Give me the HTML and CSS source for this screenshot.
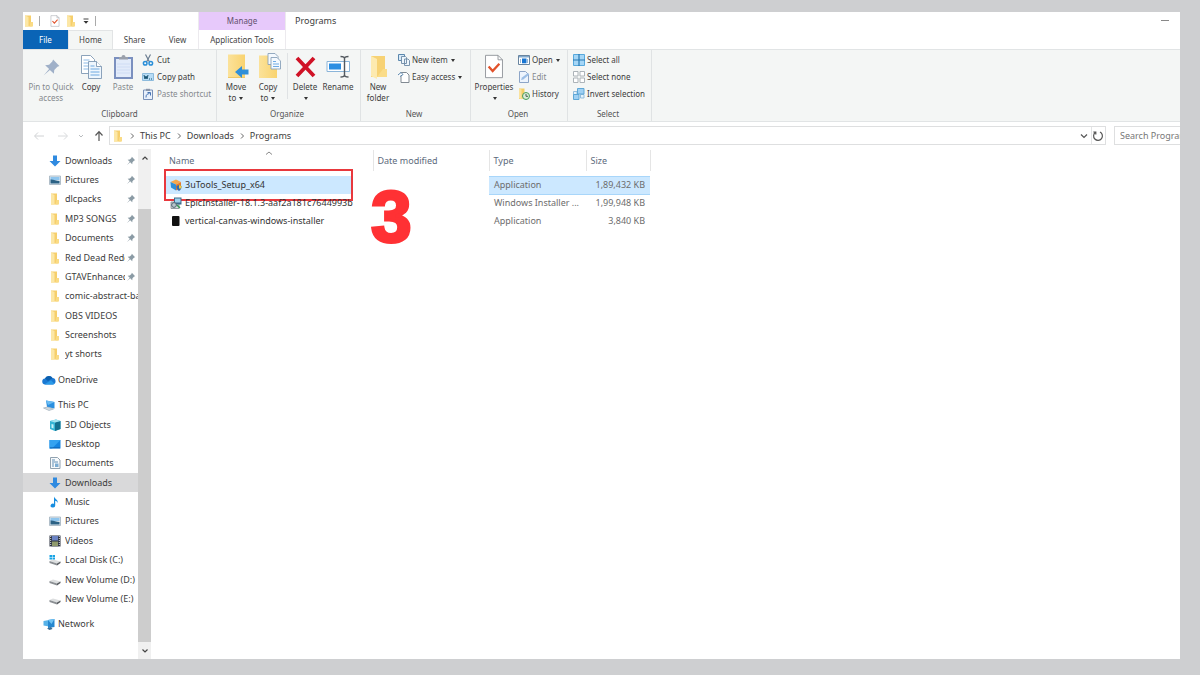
FILE: index.html
```html
<!DOCTYPE html>
<html lang="en">
<head>
<meta charset="utf-8">
<title>Programs</title>
<link rel="stylesheet" href="styles.css">
</head>
<body>
<svg class="defs" aria-hidden="true">
  <defs>
    <linearGradient id="gFolder" x1="0" x2="1"><stop offset="0" stop-color="#fbe29a"/><stop offset="1" stop-color="#f9d36f"/></linearGradient>
    <symbol id="folder" viewBox="0 0 12 12"><path d="M2 .5h6v9l1 2H2z" fill="#f6cf6c"/><path d="M2 .5l3.500 1.500v9.500L2 11.500z" fill="#fce7a6"/><path d="M7.500 7H10v4.500H6.500z" fill="#fadb85"/></symbol>
    <symbol id="pin" viewBox="0 0 24 24"><path d="M14 2l8 8-2.500 1-4 4-.5 5-5-5-8 7 7-8-5-5 5-.5 4-4z"/></symbol>
    <symbol id="doc-check" viewBox="0 0 22 28"><path d="M1.500 1.500h14l5 5v20h-19z" fill="#fff" stroke="#8c9196"/><path d="M15.500 1.500v5h5" fill="none" stroke="#8c9196"/><path d="M5 14l4.500 5L17 11" fill="none" stroke="#e2522b" stroke-width="2.600"/></symbol>
    <symbol id="down" viewBox="0 0 12 12"><path d="M4 .5h4V6h3.500L6 11.500.5 6H4z" fill="#2f8ae0"/></symbol>
    <symbol id="picture" viewBox="0 0 12 12"><path d="M.5 2h11v8.500H.5z" fill="#dfeaf2" stroke="#9fb0bd" stroke-width=".8"/><path d="M1.500 3h9v3h-9z" fill="#8ec5ee"/><path d="M1.500 9.500v-4C4 5 7 7 10.500 7v2.500z" fill="#2c6285"/></symbol>
    <symbol id="drive" viewBox="0 0 12 12"><path d="M.5 7L4 5.500l7.500 2-3.500 2z" fill="#dcdedf"/><path d="M.5 7L8 9.500v2L.5 9z" fill="#8b8f93"/><path d="M8 9.500l3.500-2v1.500L8 11.500z" fill="#55595d"/></symbol>
  </defs>
</svg>

<div class="window">
  <header class="head">
    <div class="head-left">
      <div class="quick-bar">
        <svg class="i12"><use href="#folder"/></svg><i class="bar"></i>
        <svg class="i12"><use href="#doc-check"/></svg>
        <svg class="i12"><use href="#folder"/></svg>
        <svg class="i8" viewBox="0 0 8 8"><path d="M1.500 2h5" stroke="#444"/><path d="M1.500 4h5L4 6.800z" fill="#333"/></svg><i class="bar"></i>
      </div>
      <nav class="tabs">
        <button class="tab file">File</button><button class="tab active">Home</button><button class="tab">Share</button><button class="tab">View</button>
      </nav>
    </div>
    <div class="context"><div class="manage">Manage</div><button class="tab">Application Tools</button></div>
    <h1 class="title">Programs</h1>
    <button class="minimize" aria-label="Minimize"></button>
  </header>

  <section class="ribbon">
    <div class="group clipboard">
      <div class="tools">
        <button class="big pinb dim"><svg viewBox="0 0 28 28"><use href="#pin" x="5" y="5" width="19" height="19" fill="#9fb0c8"/></svg>Pin to Quick<br>access</button>
        <button class="big copyb"><svg viewBox="0 0 28 28"><g stroke="#7f99b3" stroke-width=".9"><path d="M4.500 2.500h9l4 4v14h-13z" fill="#fff"/><path d="M6.500 7h6m-6 3h9m-9 3h9m-9 3h9" stroke="#7fb2e3"/><path d="M11.500 8.500h8l5 5v12h-13z" fill="#eef6fd"/><path d="M19.500 8.500v5h5" fill="#fff"/><path d="M13.500 13h4m-4 3h9m-9 3h9m-9 3h9" stroke="#5f9fdd"/></g></svg>Copy</button>
        <button class="big pasteb dim"><svg viewBox="0 0 28 28"><path d="M6 5h17v20H6z" fill="#e2ebfa" stroke="#7b90bf" stroke-width="2"/><path d="M10 6.500V4h2.500a2 2 0 0 1 4 0H19v2.500z" fill="#9aa0ab"/><path d="M8 11h13M8 14h13M8 17h13M8 20h13" stroke="#cfdcf4"/></svg>Paste</button>
        <div class="smalls">
          <button class="small"><svg class="i12" viewBox="0 0 12 12"><path d="M3.500.5l4 7.500M8.500.5l-4 7.500" stroke="#6b7d90" stroke-width="1.200"/><g fill="none" stroke="#2a8fd8" stroke-width="1.500"><circle cx="3.200" cy="9.300" r="1.800"/><circle cx="8.800" cy="9.300" r="1.800"/></g></svg>Cut</button>
          <button class="small"><svg class="i12" viewBox="0 0 12 12"><path d="M.5 2.500h11v7H.5z" fill="#b7dcf5" stroke="#8dbbdc"/><path d="M2 4l1 4 1-3 1 3 1-4M7 8h1m1 0h1" fill="none" stroke="#15516f"/></svg>Copy path</button>
          <button class="small dim"><svg class="i12" viewBox="0 0 12 12"><path d="M1.500 2h9v9.500h-9z" fill="#e8f0fb" stroke="#7890b8"/><path d="M4 .8h4V3H4z" fill="#8a95a8"/><path d="M4 9.500c0-3 1-3.500 3.500-4M5.500 4.500h3v3" fill="none" stroke="#4774b3"/></svg>Paste shortcut</button>
        </div>
      </div>
      <div class="caption">Clipboard</div>
    </div>
    <div class="group organize">
      <div class="tools">
        <button class="big w32"><svg viewBox="0 0 28 28"><path d="M6 1.500h17V25H6z" fill="url(#gFolder)"/><path d="M6 24.500h17" stroke="#efc765"/><path d="M13 19l7-6v3.500h6.500v5H20V25z" fill="#2f8fd9"/></svg>Move<br>to <i class="caret"></i></button>
        <button class="big w32"><svg viewBox="0 0 28 28"><path d="M5 2.500h18V25H5z" fill="url(#gFolder)"/><g fill="#f4f9fe" stroke="#8aa2ba" stroke-width=".9"><path d="M14 .5h7l3 3v8H14z"/><path d="M17 4.500h6l3.500 3.500v8H17z"/></g><path d="M19 8.500h3m-3 2.500h6m-6 2.500h6" stroke="#6faae4"/></svg>Copy<br>to <i class="caret"></i></button>
        <i class="rule"></i>
        <button class="big w34"><svg viewBox="0 0 28 28"><path d="M6 5l17 18M23 5L6 23" stroke="#d01226" stroke-width="3.800"/></svg>Delete<br><i class="caret"></i></button>
        <button class="big w32"><svg viewBox="0 0 28 28"><path d="M3 8.500h22.500v10H3z" fill="#fff" stroke="#8bb5d9"/><path d="M5 10.500h12v6H5z" fill="#2d8fe2"/><path d="M16.500 3.500c3 0 4 .5 4 2v16.500c0 1.500-1 2-4 2m8-20.500c-3 0-4 .5-4 2m0 16.500c0 1.500 1 2 4 2" fill="none" stroke="#52585e" stroke-width="1.400"/></svg>Rename</button>
      </div>
      <div class="caption">Organize</div>
    </div>
    <div class="group new">
      <div class="tools">
        <button class="big w34"><svg viewBox="0 0 28 28"><path d="M7 3h14v19l2 2H7z" fill="#f7d274"/><path d="M7 3l6 3v20l-6-3z" fill="#fdeab0"/><path d="M19 16h4v8H13z" fill="#fadc88"/></svg>New<br>folder</button>
        <div class="smalls">
          <button class="small"><svg class="i12" viewBox="0 0 12 12"><path d="M.5.5h6v6h-6z" fill="#d8eaf8" stroke="#5a87ad"/><path d="M3.500 2.500h4l1 1v6h-5zM6.500 5h3.500l1.500 1.500V11.500h-5z" fill="#eef6fc" stroke="#6d8aa5" stroke-width=".9"/></svg>New item <i class="caret"></i></button>
          <button class="small"><svg class="i12" viewBox="0 0 12 12"><path d="M3 1.500h5.500L11 4v7.500H3z" fill="#fff" stroke="#818a92"/><path d="M0 4l3-2.500 2 2-3 2" fill="#fff" stroke="#4a7ba5" stroke-width=".9"/></svg>Easy access <i class="caret"></i></button>
        </div>
      </div>
      <div class="caption">New</div>
    </div>
    <div class="group open">
      <div class="tools">
        <button class="big w44"><svg viewBox="0 0 28 28"><use href="#doc-check" x="4" y="1" width="20" height="25"/></svg>Properties<br><i class="caret"></i></button>
        <div class="smalls">
          <button class="small"><svg class="i12" viewBox="0 0 12 12"><path d="M.5 1.500h11v9H.5z" fill="#fff" stroke="#68849f"/><path d="M1 2h10v1.500H1z" fill="#82a9cc"/><path d="M2 5h1v4H2zM9 5h1v4H9z" fill="#98b7d4"/><path d="M4 4.500h4.500v4.800H4z" fill="#1775d2"/></svg>Open <i class="caret"></i></button>
          <button class="small dim"><svg class="i12" viewBox="0 0 12 12"><path d="M1.500.5h6l3 3v8h-9z" fill="#edf4fd" stroke="#8da5c7"/><path d="M3 9l1-2.500L10 2l1.300 1.500-6 5z" fill="#9cbee5"/></svg>Edit</button>
          <button class="small"><svg class="i12" viewBox="0 0 12 12"><path d="M1 .5h5.500v8l1 2L1 11z" fill="#f6cf67"/><path d="M1 .5l2.500 1v10L1 10z" fill="#fae3a0"/><circle cx="8" cy="8" r="3.500" fill="#dcebd9" stroke="#4a9d58"/><path d="M8 6v2.300h2" fill="none" stroke="#45604c"/></svg>History</button>
        </div>
      </div>
      <div class="caption">Open</div>
    </div>
    <div class="group select">
      <div class="tools">
        <div class="smalls">
          <button class="small"><svg class="i12" viewBox="0 0 12 12"><path d="M.5.5h11v11H.5z" fill="#a5d6f6" stroke="#58a9dc"/><path d="M6 0v12M0 6h12" stroke="#2879b2" stroke-width="1.200"/></svg>Select all</button>
          <button class="small"><svg class="i12" viewBox="0 0 12 12"><path d="M.5.5H5V5H.5zM7 .5h4.500V5H7zM.5 7H5v4.500H.5zM7 7h4.500v4.500H7z" fill="#fff" stroke="#a4abb1" stroke-width=".9"/></svg>Select none</button>
          <button class="small"><svg class="i12" viewBox="0 0 12 12"><path d="M.5 3.500H4V7H.5zM7.500 6.500H11V10H7.500z" fill="#e3f2fc" stroke="#93bddc"/><path d="M4.500.5h6.500v5.500H4.500zM.5 6.500h5.500v5H.5z" fill="#9fd0f3" stroke="#5ea7d6"/></svg>Invert selection</button>
        </div>
      </div>
      <div class="caption">Select</div>
    </div>
  </section>

  <div class="location">
    <div class="history">
      <button aria-label="Back"><svg class="i12" viewBox="0 0 12 12"><path d="M11 6H2M5 2.500L1.500 6 5 9.500" stroke="#d0d2d4"/></svg></button>
      <button aria-label="Forward"><svg class="i12" viewBox="0 0 12 12"><path d="M1 6h9M7 2.500L10.500 6 7 9.500" stroke="#d8dadc"/></svg></button>
      <button aria-label="Recent"><svg class="i8" viewBox="0 0 8 8"><path d="M2 3l2 2 2-2" stroke="#b9bcbf"/></svg></button>
      <button aria-label="Up"><svg class="i12" viewBox="0 0 12 12"><path d="M6 11V2M2.500 5.500L6 1.700l3.500 3.800" stroke="#555" stroke-width="1.200"/></svg></button>
    </div>
    <div class="address">
      <svg class="i12"><use href="#folder"/></svg>
      <svg class="i8 sep" viewBox="0 0 8 8"><path d="M3 1.500L5.500 4 3 6.500"/></svg><a href="#">This PC</a>
      <svg class="i8 sep" viewBox="0 0 8 8"><path d="M3 1.500L5.500 4 3 6.500"/></svg><a href="#">Downloads</a>
      <svg class="i8 sep" viewBox="0 0 8 8"><path d="M3 1.500L5.500 4 3 6.500"/></svg><a href="#">Programs</a>
      <button class="drop" aria-label="Previous locations"><svg class="i8" viewBox="0 0 8 8"><path d="M1 2.500l3 3 3-3" stroke="#555" stroke-width="1.200"/></svg></button>
      <button class="refresh" aria-label="Refresh"><svg class="i12" viewBox="0 0 12 12"><path d="M8 2a4.400 4.400 0 1 1-4.500.3M3.800 4.500V2h-2.500" stroke="#555" stroke-width="1.200"/></svg></button>
    </div>
    <input class="search" type="text" aria-label="Search Programs" placeholder="Search Programs">
  </div>

  <main class="content">
    <nav class="tree">
      <ul class="branch eleven">
        <li><a href="#"><svg class="i12"><use href="#down"/></svg><span>Downloads</span><svg class="pin"><use href="#pin"/></svg></a></li>
        <li><a href="#"><svg class="i12"><use href="#picture"/></svg><span>Pictures</span><svg class="pin"><use href="#pin"/></svg></a></li>
        <li><a href="#"><svg class="i12"><use href="#folder"/></svg><span>dlcpacks</span><svg class="pin"><use href="#pin"/></svg></a></li>
        <li><a href="#"><svg class="i12"><use href="#folder"/></svg><span>MP3 SONGS</span><svg class="pin"><use href="#pin"/></svg></a></li>
        <li><a href="#"><svg class="i12"><use href="#folder"/></svg><span>Documents</span><svg class="pin"><use href="#pin"/></svg></a></li>
        <li><a href="#"><svg class="i12"><use href="#folder"/></svg><span>Red Dead Redemption</span><svg class="pin"><use href="#pin"/></svg></a></li>
        <li><a href="#"><svg class="i12"><use href="#folder"/></svg><span>GTAVEnhanced</span><svg class="pin"><use href="#pin"/></svg></a></li>
        <li><a href="#"><svg class="i12"><use href="#folder"/></svg><span>comic-abstract-background</span></a></li>
        <li><a href="#"><svg class="i12"><use href="#folder"/></svg><span>OBS VIDEOS</span></a></li>
        <li><a href="#"><svg class="i12"><use href="#folder"/></svg><span>Screenshots</span></a></li>
        <li><a href="#"><svg class="i12"><use href="#folder"/></svg><span>yt shorts</span></a></li>
      </ul>
      <ul class="branch">
        <li><a href="#" class="root"><svg class="i14" viewBox="0 0 14 14"><path d="M3.500 11.500a3 3 0 0 1-.5-6 4.200 4.200 0 0 1 7.500-.5 3.300 3.300 0 0 1 .5 6.500z" fill="#1a78d2"/><path d="M3 5.500a4.200 4.200 0 0 1 7.500-.5L6 8z" fill="#0c5fae"/><path d="M2.500 11.300L9 7.200l3.500 3.500a3 3 0 0 1-1.500.8H3.500z" fill="#2b9ae8"/></svg><span>OneDrive</span></a></li>
      </ul>
      <ul class="branch eleven">
        <li><a href="#" class="root"><svg class="i14" viewBox="0 0 14 14"><path d="M4 2.500l8.500 1.500v6.500L5 9z" fill="#2a8fe0"/><path d="M4 2.500l8.500 1.500-6.500 3z" fill="#69bbf2"/><path d="M1.500 10l4-1 6 2-4.500 1.500z" fill="#cfd9e0" stroke="#95a6b3" stroke-width=".6"/></svg><span>This PC</span></a></li>
        <li><a href="#"><svg class="i12" viewBox="0 0 12 12"><path d="M1 2l6-1.500L11.500 2v8L6 12 1 10z" fill="#35b6d6"/><path d="M6 3.500L11.500 2v8L6 12z" fill="#14718f"/><path d="M1 2l6-1.500L11.500 2 6 3.500z" fill="#a3e4f0"/><path d="M2.500 5l2 .6v4l-2-.8z" fill="#c9f3f9"/></svg><span>3D Objects</span></a></li>
        <li><a href="#"><svg class="i12" viewBox="0 0 12 12"><path d="M.5 2h11v8.500H.5z" fill="#1684e0"/><path d="M.5 2h11L3 10.500H.5z" fill="#35a2f0"/><path d="M1 9.800h10" stroke="#0c5ca8" stroke-width=".8"/></svg><span>Desktop</span></a></li>
        <li><a href="#"><svg class="i12" viewBox="0 0 12 12"><path d="M1.500.5h7l2.500 2.500v8.500H1.500z" fill="#f7fafc" stroke="#91a2b0"/><path d="M3 3h3m-3 2h6M3 7h2m-2 2h2" stroke="#5f8eb5"/><path d="M6 6.500h3.500V10H6z" fill="#7cadd3"/></svg><span>Documents</span></a></li>
        <li><a href="#" class="current"><svg class="i12"><use href="#down"/></svg><span>Downloads</span></a></li>
        <li><a href="#"><svg class="i12" viewBox="0 0 12 12"><path d="M5 .5c.5 2.500 4.500 3 3.500 6.500-.3-1.500-1.500-2-2.300-2.200V9.500a2.300 2 0 1 1-1.200-1.700z" fill="#168de0"/></svg><span>Music</span></a></li>
        <li><a href="#"><svg class="i12"><use href="#picture"/></svg><span>Pictures</span></a></li>
        <li><a href="#"><svg class="i12" viewBox="0 0 12 12"><path d="M.5.5h11v11H.5z" fill="#2c3340"/><path d="M3 1h6v4.500H3z" fill="#6b83c4"/><path d="M3 6.500h6V11H3z" fill="#8f9a6d"/><path d="M1.700 1v10.500M10.300 1v10.500" stroke="#d9dde3" stroke-dasharray="1 1"/></svg><span>Videos</span></a></li>
        <li><a href="#"><svg class="i12" viewBox="0 0 12 12"><use href="#drive"/><path d="M.5 1H3v2H.5zM3.500 1H6v2H3.500zM.5 3.500H3v2H.5zM3.500 3.500H6v2H3.500z" fill="#17a3e5"/></svg><span>Local Disk (C:)</span></a></li>
        <li><a href="#"><svg class="i12"><use href="#drive"/></svg><span>New Volume (D:)</span></a></li>
        <li><a href="#"><svg class="i12"><use href="#drive"/></svg><span>New Volume (E:)</span></a></li>
      </ul>
      <ul class="branch">
        <li><a href="#" class="root"><svg class="i14" viewBox="0 0 14 14"><path d="M1.500 4L7 3v6.500l-5.500-1z" fill="#57b2e8"/><path d="M6 3l6.500-1v8L6 11z" fill="#2587cf"/><path d="M6 3l6.500-1-3 5z" fill="#6fc3f3"/><path d="M5 11.500l4-1.500 1.500 2-3 1z" fill="#3c6d92"/></svg><span>Network</span></a></li>
      </ul>
    </nav>
    <div class="scroll">
      <button aria-label="Scroll up"><svg class="i8" viewBox="0 0 8 8"><path d="M1.500 5.500L4 3l2.500 2.500" stroke="#444" stroke-width="1.200"/></svg></button>
      <div class="track"><div class="thumb"></div></div>
      <button aria-label="Scroll down"><svg class="i8" viewBox="0 0 8 8"><path d="M1.500 2.500L4 5l2.500-2.500" stroke="#444" stroke-width="1.200"/></svg></button>
    </div>
    <div class="files">
      <table>
        <colgroup><col class="c-name"><col class="c-date"><col class="c-type"><col class="c-size"></colgroup>
        <thead><tr><th class="sorted">Name<svg class="i8 sort" viewBox="0 0 8 8"><path d="M1 5.500l3-2.500 3 2.500" stroke="#888"/></svg></th><th>Date modified</th><th>Type</th><th>Size</th></tr></thead>
        <tbody>
          <tr class="chosen"><td><div class="name"><svg class="i12" viewBox="0 0 12 12"><path d="M.5 3L6 .5 11 3 6 5.500z" fill="#f6a84c"/><path d="M.5 3L6 5.500v6L1 8.500z" fill="#2f8fd8"/><path d="M6 5.500L11 3v5.500l-5 3z" fill="#e87b2a"/><path d="M6.500 7l2.500-1 2.500 1c0 2.500-.5 3.800-2.500 5-2-1.200-2.500-2.500-2.500-5z" fill="#356bb0"/><path d="M9 6l2.500 1c0 1-.1 1.800-.4 2.500H9z" fill="#f3cc3b"/></svg>3uTools_Setup_x64</div><div class="highlight"></div><div class="step">3</div></td><td></td><td>Application</td><td>1,89,432 KB</td></tr>
          <tr><td><div class="name"><svg class="i12" viewBox="0 0 12 12"><path d="M1 5h8v6.500H1z" fill="#d9dde0" stroke="#7c868e" stroke-width=".8"/><path d="M4 .5h7.500v7H4z" fill="#3f6d8d"/><path d="M5 1.500h5.500v4H5z" fill="#9fd0ea"/><circle cx="4" cy="8" r="2.400" fill="#b9c5cc" stroke="#516773"/><path d="M7 8l3 3" stroke="#359a55" stroke-width="1.500"/></svg>EpicInstaller-18.1.3-aaf2a181c7644993b</div></td><td></td><td>Windows Installer ...</td><td>1,99,948 KB</td></tr>
          <tr><td><div class="name"><svg class="i12" viewBox="0 0 12 12"><rect x="2" y="1" width="7.500" height="10" rx="1" fill="#111"/></svg>vertical-canvas-windows-installer</div></td><td></td><td>Application</td><td>3,840 KB</td></tr>
        </tbody>
      </table>
    </div>
  </main>
</div>
</body>
</html>
```
FILE: styles.css
```css
* { box-sizing: border-box; }
body {
  margin: 0;
  min-height: 100vh;
  padding: 12px 20px 16px 23px;
  display: flex;
  background: #cecfd1;
  color: #3c3c3c;
  font: 9px/12px "Noto Sans", "Open Sans", sans-serif;
}
button, input { font: inherit; color: inherit; background: none; border: 0; padding: 0; margin: 0; }
a { color: inherit; text-decoration: none; }
ul { list-style: none; margin: 0; padding: 0; }
svg { display: block; flex: none; fill: none; }
.defs { position: absolute; width: 0; height: 0; }
.i8 { width: 8px; height: 8px; }
.i12 { width: 12px; height: 12px; }
.i14 { width: 14px; height: 14px; }

.window { flex: 1; min-width: 0; display: flex; flex-direction: column; background: #fff; overflow: hidden; }

.head { display: flex; }
.head-left { width: 175px; }
.quick-bar { display: flex; align-items: center; gap: 4px; height: 18px; }
.quick-bar .bar { width: 1px; height: 10px; margin: 0 5px 0 0; background: #aaa; }
.quick-bar .i8 { margin: 0 1px; }
.tabs { display: flex; }
.tab { height: 19px; min-width: 43px; text-align: center; font-size: 8px; color: #444; }
.tab.file { min-width: 45px; background: #0a64b6; color: #fff; }
.tab.active { min-width: 45px; background: #f4f6f5; border: 1px solid #e2e4e5; border-bottom: 0; }
.context { width: 88px; border: 1px solid #eceaee; border-width: 0 1px; }
.manage { height: 18px; line-height: 17px; background: #e7c9fb; text-align: center; font-size: 8px; color: #61506d; }
.context .tab { width: 100%; }
.title { margin: 0 0 0 9px; font-size: 9px; line-height: 18px; font-weight: 400; }
.minimize { width: 8px; height: 1px; margin: 8px 11px 0 auto; background: #888; }

.ribbon { display: flex; height: 73px; background: #f4f6f5; border: 1px solid #e1e4e5; border-width: 1px 0; font-size: 8px; }
.group { display: flex; flex-direction: column; border-right: 1px solid #e0e3e4; }
.tools { display: flex; flex: 1; }
.caption { text-align: center; line-height: 14px; color: #555; }
.clipboard { width: 194px; padding-left: 4px; }
.clipboard .caption { padding-right: 4px; }
.organize { width: 144px; padding-left: 3px; }
.organize .caption { padding-right: 6px; }
.new { width: 110px; }
.new .caption { padding-right: 3px; }
.open { width: 97px; padding-left: 1px; }
.open .caption { padding-right: 3px; }
.select { width: 84px; padding-left: 2px; }
.select .caption { padding-right: 5px; }
.big { display: flow-root; padding-top: 3px; line-height: 11px; text-align: center; vertical-align: top; white-space: nowrap; align-self: flex-start; }
.big svg { width: 28px; height: 28px; margin: 0 auto; }
.pinb { width: 48px; }
.copyb { width: 32px; }
.pasteb { width: 32px; }
.w32 { width: 32px; }
.w34 { width: 34px; }
.w44 { width: 44px; }
.rule { width: 1px; height: 46px; margin: 3px 0 0 3px; background: #dfe2e4; }
.smalls { display: flex; flex-direction: column; gap: 5px; padding: 4px 0 0 3px; }
.small { display: flex; align-items: center; gap: 2px; height: 12px; white-space: nowrap; }
.clipboard .small { gap: 3px; }
.open .smalls { padding-left: 2px; }
.dim { color: #85898d; }
.caret { display: inline-block; border: 2px solid transparent; border-top: 3px solid #333; border-bottom: 0; vertical-align: middle; margin-left: 1px; }

.location { display: flex; align-items: center; height: 27px; font-size: 9px; }
.history { display: flex; align-items: center; width: 86px; padding-left: 10px; gap: 12px; }
.history button:nth-child(3), .history button:nth-child(4) { margin-left: -4px; }
.address { flex: 1; display: flex; align-items: center; gap: 4px; height: 19px; border: 1px solid #dedfe0; padding-left: 2px; margin-right: 8px; }
.sep path { stroke: #666; }
.drop { margin-left: auto; }
.refresh { align-self: stretch; width: 14px; margin-left: -1px; border-left: 1px solid #e3e4e5; }
.search { width: 66px; height: 19px; border: 1px solid #dedfe0; border-right: 0; padding-left: 5px; }
.search::placeholder { color: #777; opacity: 1; }

.content { flex: 1; display: flex; }
.tree { width: 115px; display: flex; flex-direction: column; gap: 6px; padding: 2px 0 25px; font-size: 9px; }
.branch { flex: 1 1 0; display: grid; grid-template-columns: minmax(0, 1fr); grid-auto-rows: 1fr; }
.branch.eleven { flex-grow: 11; }
.branch a { height: 100%; display: flex; align-items: center; gap: 4px; padding-left: 26px; }
.branch a.root { padding-left: 19px; gap: 2px; }
.branch a.current { background: #d9d9da; }
.branch span { flex: 1; min-width: 0; overflow: hidden; white-space: nowrap; }
.branch .pin { width: 10px; height: 10px; margin: 0 2px 0 -3px; fill: #8b9ba5; }
.scroll { width: 13px; display: flex; flex-direction: column; background: #f0f0f0; }
.scroll button { height: 17px; display: flex; align-items: center; justify-content: center; }
.track { flex: 1; padding-top: 43px; display: flex; }
.thumb { flex: 1; background: #cdcdcd; }

.files { flex: 1; padding: 1px 0 0 14px; }
table { table-layout: fixed; border-collapse: collapse; width: 485px; font-size: 9px; }
.c-name { width: 208px; }
.c-date { width: 116px; }
.c-type { width: 97px; }
.c-size { width: 64px; }
th { height: 21px; padding: 0 0 0 4px; text-align: left; font-weight: 400; color: #5c6a7c; border-right: 1px solid #e5e5e5; }
tbody::before { content: ""; display: block; height: 5px; }
td { height: 18px; padding: 0 4px 0 5px; white-space: nowrap; color: #6d6d6d; }
td:first-child { position: relative; padding: 0; }
td:last-child { text-align: right; padding-right: 5px; }
.sorted { position: relative; }
.sort { position: absolute; left: 100px; top: -1px; }
.name { display: flex; align-items: center; gap: 3px; width: 188px; height: 18px; padding-left: 5px; overflow: hidden; color: #333; }
.chosen .name { background: #cce8ff; }
.chosen td:nth-child(n+3) { background: #cce8ff; border: 1px solid #a8d6fa; border-width: 1px 0; }
.highlight { position: absolute; left: -1px; top: -7px; width: 189px; height: 32px; border: 2px solid #e8383d; }
.step { position: absolute; left: 206px; top: 11px; color: #ff3134; font: 700 73px/60px "Liberation Sans", sans-serif; -webkit-text-stroke: 3px #ff3134; }
```
